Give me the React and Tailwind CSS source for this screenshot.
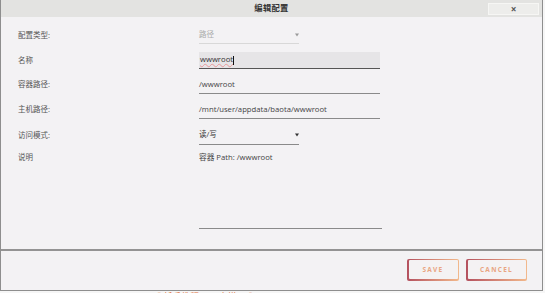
import React from "react";

const font = "font-['Open_Sans','Noto_Sans_CJK_SC',sans-serif]";

function Arrow({ light }) {
	return (
		<svg width="4" height="4" viewBox="0 0 4 4">
			<path d="M0 0.5 L4 0.5 L2 3.5 Z" fill={light ? "#9a9a9a" : "#333"} />
		</svg>
	);
}

function Row({ label, height, className = "", children }) {
	return (
		<div className={`flex items-center pl-[17px] ${height} ${className}`}>
			<div className="w-[181px] shrink-0 text-[7.5px] text-[#555]">{label}</div>
			{children}
		</div>
	);
}

export default function App() {
	return (
		<div className={`w-[545px] h-[293px] bg-[#f6f6f6] overflow-hidden ${font}`}>
			<div className="w-[543px] h-[291px] flex flex-col bg-[#f3f2f4] border-l-[1.5px] border-r border-b-[1.5px] border-[#8e8e8e]">
				{/* title bar */}
				<div className="h-[17px] shrink-0 grid grid-cols-[1fr_auto_1fr] items-center bg-[#e3e3e1]">
					<div />
					<div className="text-[8.3px] font-bold text-[#333] tracking-[0.3px]">编辑配置</div>
					<div className="justify-self-end mr-[3px] w-[51px] h-[12px] flex items-center justify-center bg-[#ededeb] border border-[#f6f6f4] text-[10px] font-bold text-[#555] leading-none">
						×
					</div>
				</div>

				{/* form */}
				<div className="flex flex-col pt-[10px]">
					<Row label="配置类型:" height="h-[17px]">
						<div className="w-[100px] h-full flex items-center justify-between border-b border-[#d8d8d8] text-[7.5px] text-[#aaa]">
							<span>路径</span>
							<Arrow light />
						</div>
					</Row>

					<Row label="名称" height="h-[17px]" className="mt-[8px]">
						<div className="w-[181px] h-full flex items-center pl-[1px] bg-[#e6e5e7] border-b border-[#555] text-[7.7px] text-[#333]">
							<span className="underline decoration-wavy decoration-[#e89a9a] decoration-[0.5px] underline-offset-[1px]">wwwroot</span>
							<span className="w-[1px] h-[9px] bg-[#111]" />
						</div>
					</Row>

					<Row label="容器路径:" height="h-[18px]" className="mt-[7px]">
						<div className="w-[181px] h-full flex items-center border-b-[1.5px] border-[#8a8a8a] text-[7.7px] text-[#444]">
							/wwwroot
						</div>
					</Row>

					<Row label="主机路径:" height="h-[18px]" className="mt-[7px]">
						<div className="w-[181px] h-full flex items-center border-b-[1.5px] border-[#8a8a8a] text-[7.7px] text-[#444]">
							/mnt/user/appdata/baota/wwwroot
						</div>
					</Row>

					<Row label="访问模式:" height="h-[19px]" className="mt-[7px]">
						<div className="w-[100px] h-full flex items-center justify-between border-b-[1.5px] border-[#8a8a8a] text-[7.5px] text-[#333]">
							<span>读/写</span>
							<Arrow />
						</div>
					</Row>

					<Row label="说明" height="h-[14px]" className="mt-[6px]">
						<div className="text-[7.7px] text-[#444]">容器 Path: /wwwroot</div>
					</Row>

					<div className="h-[64px] pl-[198px]">
						<div className="w-[183px] h-full border-b-[1.5px] border-[#8a8a8a]" />
					</div>
				</div>

				<div className="mt-[20px] h-[1.5px] bg-[#939393]" />

				{/* footer */}
				<div className="flex justify-end gap-[7px] pt-[8px] pr-[15px]">
					<div className="w-[52px] h-[22px] p-[1.5px] rounded-[2px] bg-linear-to-r from-[#b4515f] to-[#f2b98c]">
						<div className="w-full h-full rounded-[1px] bg-[#f4f2f3] flex items-center justify-center text-[6.5px] font-bold tracking-[1.3px] text-[#e9a582]">
							SAVE
						</div>
					</div>
					<div className="w-[61px] h-[22px] p-[1.5px] rounded-[2px] bg-linear-to-r from-[#b4515f] to-[#f2b98c]">
						<div className="w-full h-full rounded-[1px] bg-[#f4f2f3] flex items-center justify-center text-[6.5px] font-bold tracking-[1.3px] text-[#e9a582]">
							CANCEL
						</div>
					</div>
				</div>
			</div>

			{/* page behind the dialog, only its top edge shows */}
			<div className="h-[2px] overflow-hidden pl-[152px] flex gap-[12px] text-[9px] leading-[12px] text-[#e0703a]">
				<span>【 新手教程</span>
				<span>| 宝塔</span>
				<span>】</span>
			</div>
		</div>
	);
}
